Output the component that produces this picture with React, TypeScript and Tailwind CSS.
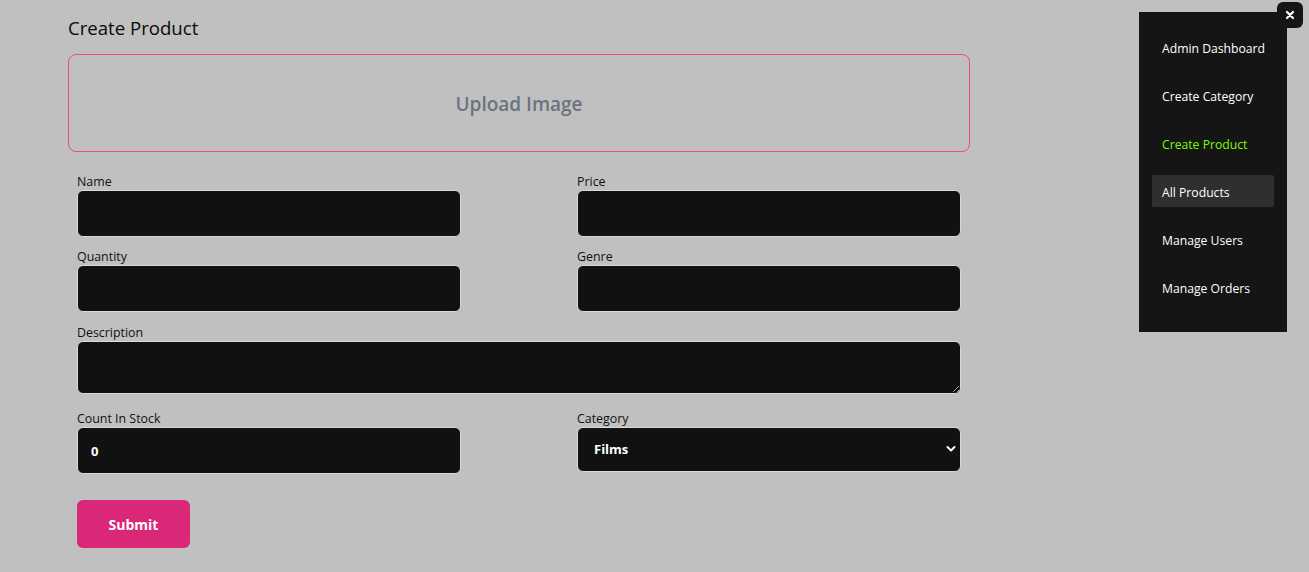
import React from "react";

const font = { fontFamily: '"Open Sans", "Noto Sans", sans-serif' };

function Label({ children }: { children: React.ReactNode }) {
  return <label className="block text-[12.4px] leading-[16px] text-[#111] pt-px">{children}</label>;
}

const inputCls =
  "block w-full h-[47px] bg-[#111111] border border-[#d9d9d9] rounded-[6px] px-[13px] text-white text-[13px] font-bold outline-none";

export default function App() {
  const items = [
    "Admin Dashboard",
    "Create Category",
    "Create Product",
    "All Products",
    "Manage Users",
    "Manage Orders",
  ];
  return (
    <div className="relative min-h-screen w-full bg-[#c0c0c0]" style={font}>
      <div className="pl-[68px] pt-[14px] w-[970px]">
        <h2 className="text-[18.6px] leading-[28px] text-[#0a0a0a]">Create Product</h2>
        <div className="mt-[12px] h-[98px] border border-[#ec4899] rounded-[8px] flex items-center justify-center pt-[2px]">
          <span className="text-[19px] font-semibold text-[#6b7280]">Upload Image</span>
        </div>
        <form className="ml-[9px] w-[884px] mt-[21px]">
          <div className="grid grid-cols-[384px_384px] gap-x-[116px]">
            <div>
              <Label>Name</Label>
              <input className={inputCls} />
            </div>
            <div>
              <Label>Price</Label>
              <input className={inputCls} />
            </div>
            <div className="mt-[11px]">
              <Label>Quantity</Label>
              <input className={inputCls} />
            </div>
            <div className="mt-[11px]">
              <Label>Genre</Label>
              <input className={inputCls} />
            </div>
          </div>
          <div className="mt-[12px]">
            <Label>Description</Label>
            <textarea className="block w-full h-[53px] bg-[#111111] border border-[#d9d9d9] rounded-[6px] px-[13px] py-2 text-white text-[13px] outline-none" />
          </div>
          <div className="grid grid-cols-[384px_384px] gap-x-[116px] mt-[16px]">
            <div>
              <Label>Count In Stock</Label>
              <input className={inputCls} defaultValue="0" />
            </div>
            <div>
              <Label>Category</Label>
              <div className="relative">
                <select className="block w-full h-[45px] appearance-none bg-[#111111] border border-[#d9d9d9] rounded-[6px] pl-[16px] text-white text-[13px] font-bold outline-none">
                  <option>Films</option>
                </select>
                <svg
                  className="absolute right-[5px] top-[18px] pointer-events-none"
                  width="10"
                  height="8"
                  viewBox="0 0 10 8"
                  fill="none"
                >
                  <path d="M1.5 2 L5 5.5 L8.5 2" stroke="white" strokeWidth="2" strokeLinecap="round" strokeLinejoin="round" />
                </svg>
              </div>
            </div>
          </div>
          <button
            type="button"
            className="mt-[26px] w-[113px] h-[48px] bg-[#db2777] rounded-[6px] text-white text-[14px] font-bold"
          >
            Submit
          </button>
        </form>
      </div>

      <div className="absolute left-[1139px] top-[12px] w-[148px] h-[320px] bg-[#151515] pt-[19px] px-[13px]">
        <ul className="flex flex-col gap-[16px]">
          {items.map((it) => (
            <li
              key={it}
              className={`h-[32px] flex items-center pl-[10px] pt-[4px] rounded-[2px] text-[12.2px] ${
                it === "All Products" ? "bg-[#2f2f2f]" : ""
              } ${it === "Create Product" ? "text-[#7cfc00]" : "text-white"}`}
            >
              {it}
            </li>
          ))}
        </ul>
      </div>
      <button
        type="button"
        className="absolute left-[1277px] top-[2px] w-[26px] h-[26px] rounded-[6px] bg-[#151515] flex items-center justify-center"
      >
        <svg width="10" height="10" viewBox="0 0 10 10">
          <path d="M2 2 L8 8 M8 2 L2 8" stroke="white" strokeWidth="2.2" strokeLinecap="round" />
        </svg>
      </button>
    </div>
  );
}
